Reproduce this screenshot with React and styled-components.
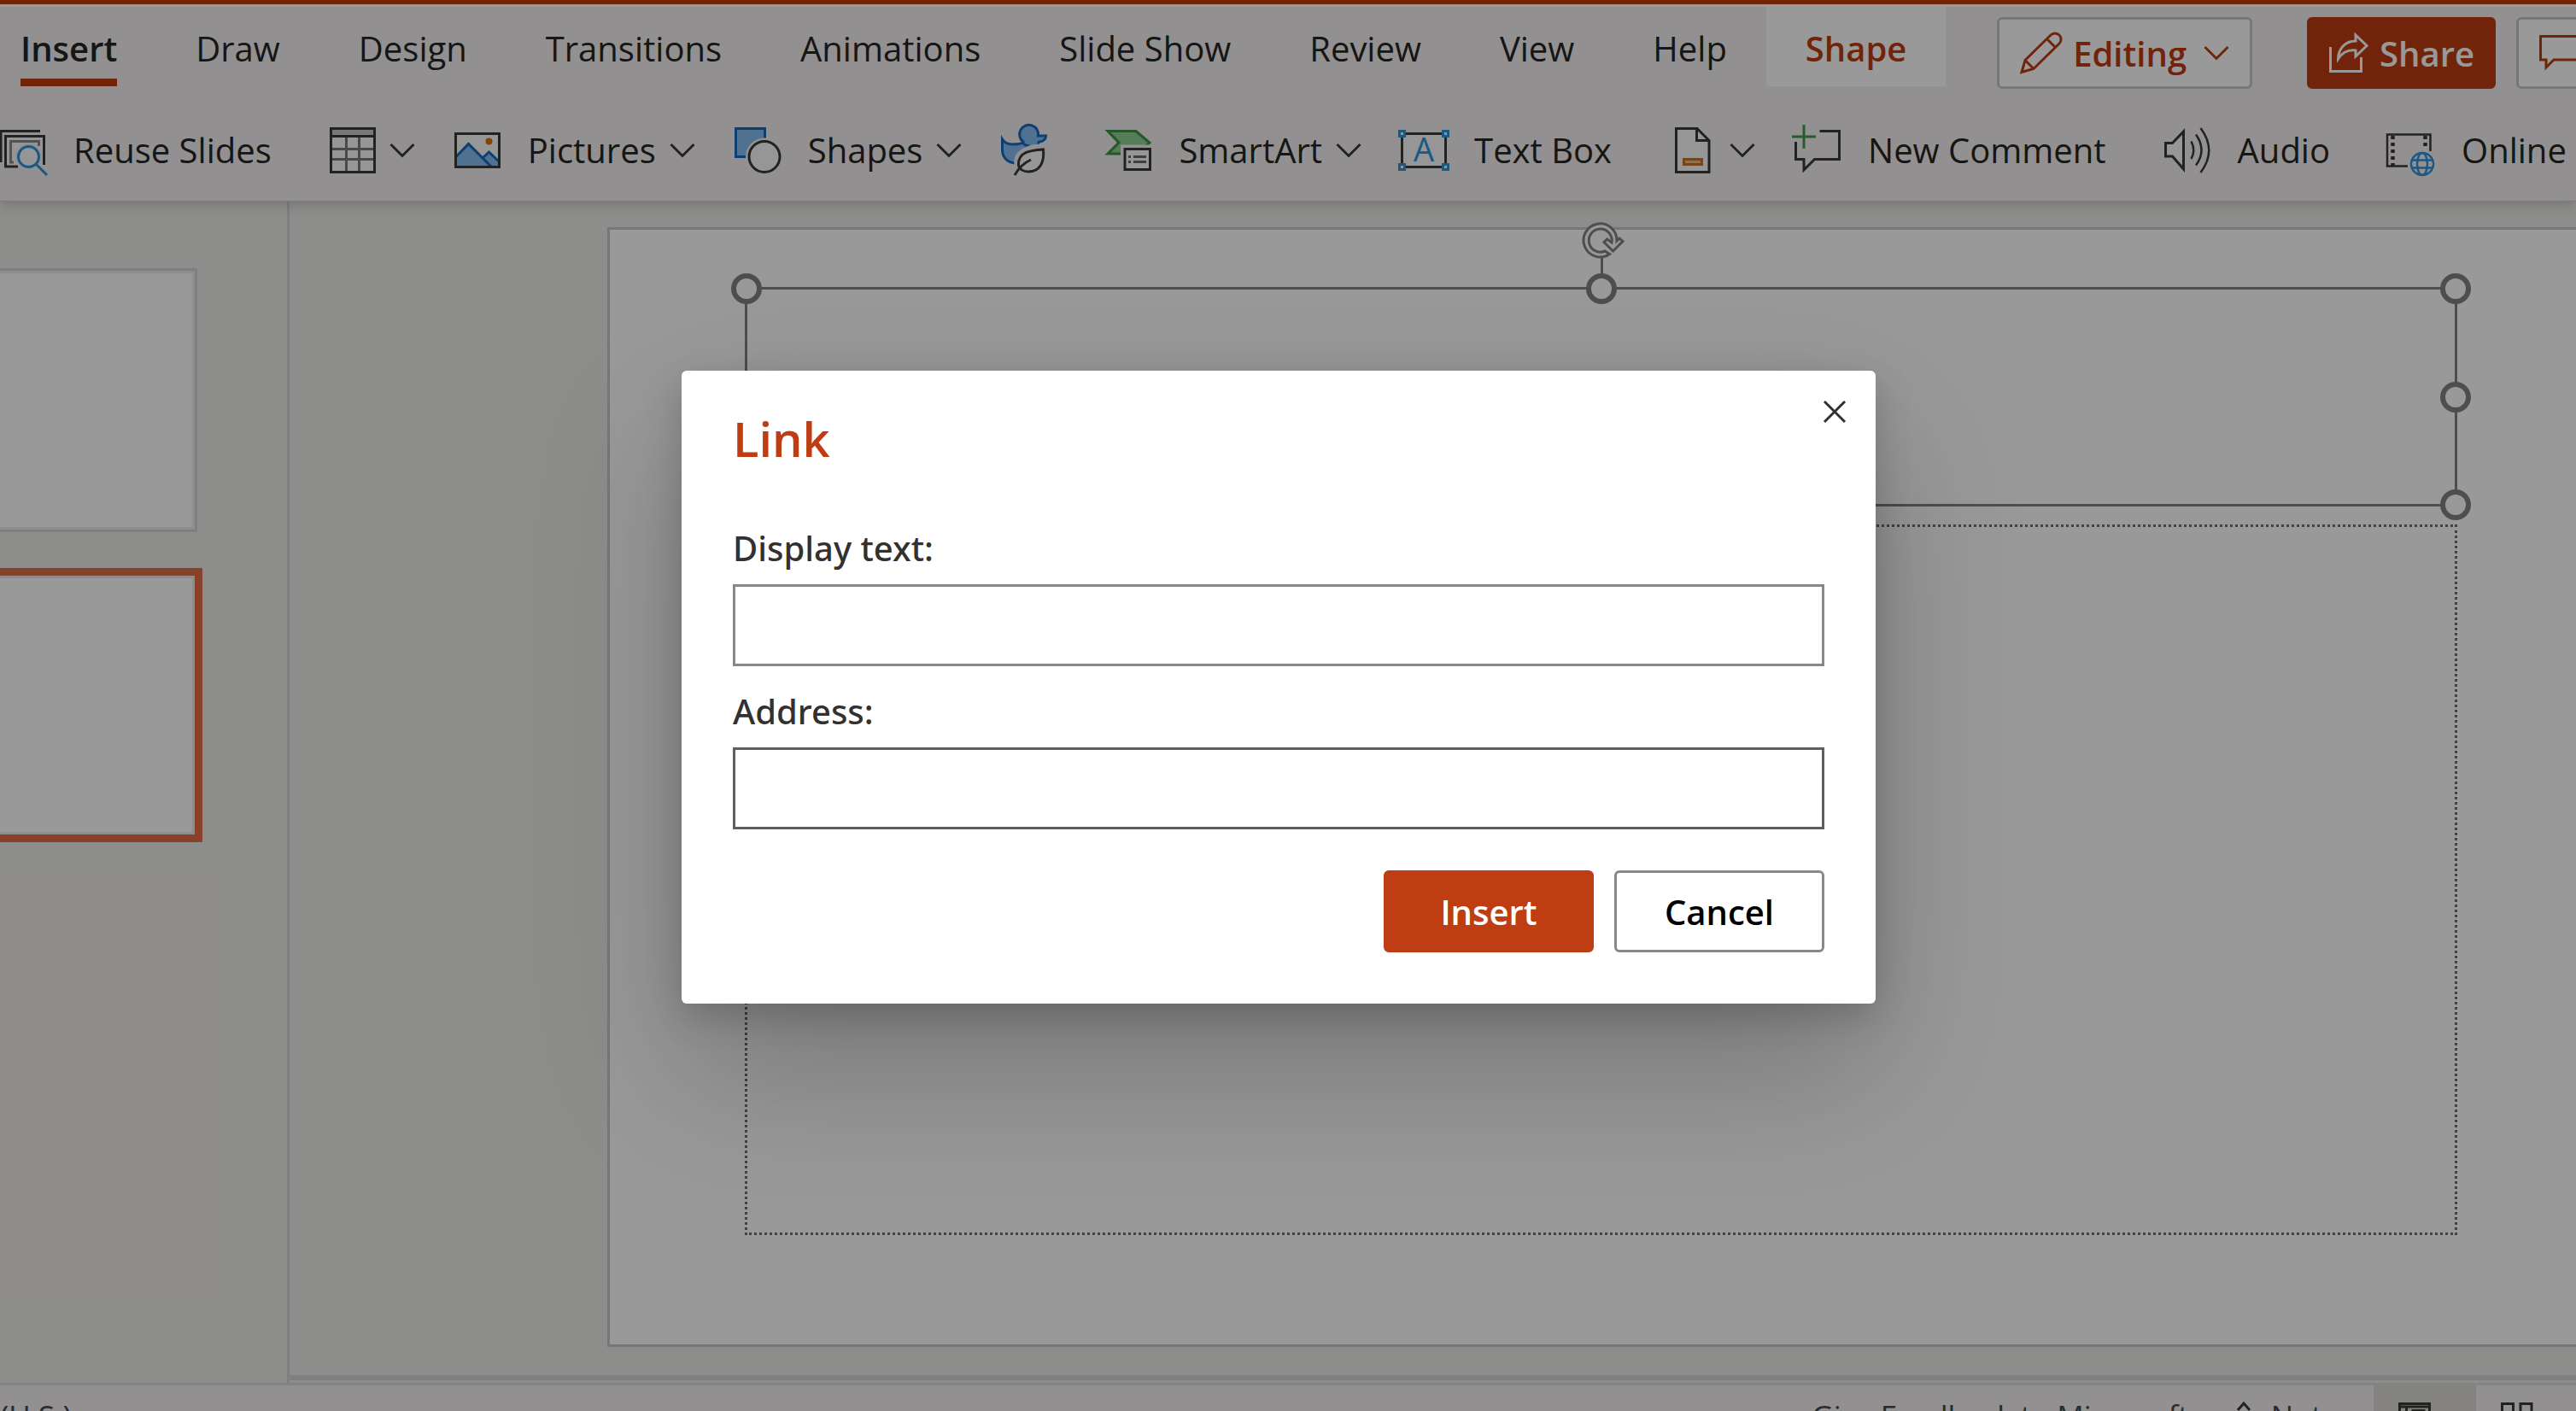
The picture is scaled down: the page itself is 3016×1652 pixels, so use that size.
import React from "react";
import styled, { createGlobalStyle } from "styled-components";

const accent = "#be3d12";
const ink = "#262524";
const line = "#3a3938";
const blue = "#1669bd";
const sky = "#2f93dc";
const paper = "#fafafa";
const chrome = "#f4f1f1";

const Global = createGlobalStyle`
  * { box-sizing: border-box; }
  body { margin: 0; background: #ecebe8; overflow: hidden; }
  body, button, input { font-family: "Open Sans", "Noto Sans", sans-serif; }
  svg { display: block; overflow: visible; flex: none; }
  button { border: 0; background: none; padding: 0; margin: 0; white-space: nowrap; cursor: pointer; }
`;

const Shell = styled.div`
  position: relative;
  display: flex;
  flex-direction: column;
  height: 100vh;
  overflow: hidden;
`;

const Header = styled.header`
  position: relative;
  z-index: 1;
  flex: none;
  overflow-x: clip;
  background: ${chrome};
  border-top: 5px solid ${accent};
  border-bottom: 1px solid #cfcdca;
  box-shadow: 0 2px 16px rgba(0, 0, 0, 0.2);
`;

const TabRow = styled.div`
  display: flex;
  align-items: flex-start;
  border-top: 3px solid #ffffff;
`;

const Tabs = styled.nav`
  display: flex;
  margin-left: -22px;
`;

const Tab = styled.button`
  padding: 0 46px;
  font-size: 40px;
  line-height: 60px;
  font-weight: ${(p) => (p.$active || p.$contextual ? 600 : 400)};
  color: ${(p) => (p.$contextual ? accent : ink)};
  background: ${(p) => (p.$contextual ? "#ffffff" : "transparent")};
`;

const TabLabel = styled.span`
  display: block;
  padding: 19px 0 5px;
  border-bottom: 9px solid ${(p) => (p.$active ? accent : "transparent")};
`;

const Actions = styled.div`
  display: flex;
  gap: 24px;
  margin: 12px -32px 0 auto;
`;

const ActionButton = styled.button`
  display: flex;
  align-items: center;
  height: 84px;
  padding: 0 ${(p) => (p.$solid ? 22 : 24)}px;
  gap: 12px;
  border: 3px solid ${(p) => (p.$solid ? accent : "#c8c6c4")};
  border-radius: 6px;
  font-size: 40px;
  font-weight: 600;
  color: ${(p) => (p.$solid ? "#ffffff" : accent)};
  background: ${(p) => (p.$solid ? accent : "#ffffff")};
  margin-right: ${(p) => (p.$apart ? "40px" : "0")};
`;

const ActionText = styled.span`
  display: flex;
  align-items: center;
  gap: 20px;
`;

const Ribbon = styled.div`
  display: flex;
  align-items: center;
  gap: 46px;
  height: 118px;
  margin-top: 13px;
`;

const Command = styled.button`
  display: flex;
  align-items: center;
  flex: none;
  gap: ${(p) => (p.$compact ? 16 : 32)}px;
  padding-right: ${(p) => (p.$menu ? 0 : 22)}px;
  font-size: 40px;
  line-height: 60px;
  color: ${ink};
`;

const CommandText = styled.span`
  display: flex;
  align-items: center;
  gap: 16px;
`;

const Body = styled.main`
  flex: 1;
  display: flex;
  min-height: 0;
`;

const Thumbs = styled.aside`
  flex: none;
  width: 339px;
  padding-top: 78px;
  border-right: 3px solid #d3d4d8;
`;

const Thumb = styled.div`
  width: ${(p) => (p.$selected ? 237 : 231)}px;
  height: ${(p) => (p.$selected ? 321 : 309)}px;
  margin-bottom: 42px;
  padding: 3px 3px 3px 0;
  border: solid ${(p) => (p.$selected ? "#e66d47" : "#d4d4da")};
  border-width: ${(p) => (p.$selected ? "9px 9px 9px 0" : "3px 3px 3px 0")};
  &::after {
    content: "";
    display: block;
    height: 100%;
    background: #ffffff;
  }
`;

const Canvas = styled.section`
  flex: 1;
  min-width: 0;
  display: flex;
  padding: 30px 0 33px 372px;
  border-bottom: 6px solid #d0d4d6;
  margin-bottom: 3px;
`;

const Slide = styled.div`
  flex: 1;
  display: flex;
  flex-direction: column;
  gap: 23px;
  margin-right: -22px;
  padding: 69px 160px 128px;
  background: #ffffff;
  border: 3px solid #c7c7c6;
`;

const TitleBox = styled.div`
  position: relative;
  height: 253px;
  &::before {
    content: "";
    position: absolute;
    inset: -2px;
    border: 3px solid #82827f;
  }
`;

const BodyBox = styled.div`
  flex: 1;
  margin: 0 -2px;
  border: 3px dotted #6e6e6c;
`;

const Handle = styled.i`
  position: absolute;
  left: ${(p) => p.$x}%;
  top: ${(p) => p.$y}%;
  width: 36px;
  height: 36px;
  margin: -18px;
  border: 6px solid #82827f;
  border-radius: 50%;
  background: #ffffff;
`;

const Rotator = styled.div`
  position: absolute;
  left: 50%;
  bottom: 100%;
  width: 3px;
  height: 38px;
  margin-left: -1px;
  background: #82827f;
  svg {
    position: absolute;
    left: -23px;
    bottom: 34px;
  }
`;

const StatusBar = styled.footer`
  flex: none;
  display: flex;
  justify-content: space-between;
  height: 33px;
  overflow: hidden;
  border-top: 3px solid #dedbd7;
  background: ${chrome};
  font-size: 35px;
  line-height: 48px;
  color: #4a4846;
`;

const StatusGroup = styled.div`
  display: flex;
  align-items: flex-start;
  margin-right: -3px;
`;

const StatusButton = styled.button`
  display: flex;
  align-items: flex-start;
  gap: 24px;
  margin-right: ${(p) => p.$after}px;
  padding-top: 12px;
  font-size: 35px;
  line-height: 48px;
  color: #4a4846;
`;

const ViewButton = styled.button`
  display: flex;
  width: 120px;
  height: 66px;
  padding: 20px 0 0 29px;
  background: ${(p) => (p.$on ? "#dddbd7" : "transparent")};
`;

const Region = styled.span`
  padding-top: 12px;
`;

const Overlay = styled.div`
  position: absolute;
  inset: 0;
  z-index: 2;
  display: flex;
  align-items: center;
  justify-content: center;
  padding: 0 22px 43px 0;
  background: rgba(0, 0, 0, 0.4);
`;

const Dialog = styled.form`
  position: relative;
  width: 1398px;
  padding: 39px 60px 60px;
  border-radius: 6px;
  background: #ffffff;
  box-shadow: 0 77px 173px rgba(0, 0, 0, 0.22), 0 14px 43px rgba(0, 0, 0, 0.18);
`;

const Title = styled.h1`
  margin: 0 0 59px;
  font-size: 56px;
  line-height: 80px;
  font-weight: 600;
  color: ${accent};
`;

const Close = styled.button`
  position: absolute;
  top: 35px;
  right: 35px;
`;

const Field = styled.div`
  display: flex;
  flex-direction: column;
  gap: 12px;
  margin-bottom: 23px;
`;

const Label = styled.label`
  font-family: "Noto Sans", "Open Sans", sans-serif;
  font-size: 40px;
  line-height: 60px;
  font-weight: 500;
  color: #323130;
`;

const Input = styled.input`
  height: 96px;
  padding: 0 24px;
  border: 3px solid ${(p) => (p.$strong ? "#605e5c" : "#8a8886")};
  border-radius: 0;
  outline: none;
  font-size: 40px;
  background: #ffffff;
`;

const Buttons = styled.div`
  display: flex;
  justify-content: flex-end;
  gap: 24px;
  padding-top: 25px;
`;

const DialogButton = styled.button`
  width: 246px;
  height: 96px;
  border: 3px solid ${(p) => (p.$primary ? accent : "#8a8886")};
  border-radius: 6px;
  font-size: 40px;
  font-weight: 600;
  color: ${(p) => (p.$primary ? "#ffffff" : "#000000")};
  background: ${(p) => (p.$primary ? accent : "#ffffff")};
`;

const Icon = ({ w = 54, h = 54, stroke = line, sw = 3, children }) => (
  <svg width={w} height={h} viewBox={`0 0 ${w} ${h}`} fill="none" stroke={stroke} strokeWidth={sw} aria-hidden="true">
    {children}
  </svg>
);

const Chevron = ({ color = line }) => (
  <Icon w={30} h={18} stroke={color}>
    <path d="M1.5 2L15 15.5L28.5 2" />
  </Icon>
);

const ReuseIcon = () => (
  <Icon>
    <path d="M47 4.5H1V41" />
    <path d="M6.5 10.5H51.5V46H6.5Z" fill={paper} stroke="none" />
    <path d="M21 46H6.5V10.5H51.5V44" />
    <path d="M16 41H12.5V16.5H45.5V22" stroke="#8c8a88" />
    <path d="M42 43L56 57M45.5 34.5a12 12 0 1 1-24 0a12 12 0 1 1 24 0" stroke={chrome} strokeWidth="8" />
    <circle cx="33.5" cy="34.5" r="12" fill={paper} stroke={sky} />
    <path d="M42 43L55 56" stroke={sky} />
  </Icon>
);

const TableIcon = () => (
  <Icon>
    <path d="M1.5 1.5H52.5V52.5H1.5Z" fill={paper} stroke="none" />
    <path d="M1.5 1.5H52.5V10.5H1.5Z" fill="#cccac8" stroke="none" />
    <path d="M19.5 10.5V52M34.5 10.5V52M2 25.5H52M2 37.5H52" stroke="#7c7a78" />
    <path d="M1.5 1.5H52.5V52.5H1.5ZM1.5 10.5H52.5" />
  </Icon>
);

const PictureIcon = () => (
  <Icon>
    <path d="M1.5 7.5H52.5V46.5H1.5Z" fill={paper} stroke="none" />
    <path d="M2 34.5L16.5 19.5L43 46H2ZM33 36L40.5 29L52 40V46H43Z" fill="#88bdf0" stroke="none" />
    <path d="M2 34.5L16.5 19.5L43 46M33 36L40.5 29L52 40" stroke={blue} />
    <circle cx="40.5" cy="16.5" r="4" fill="#dc6e0d" stroke="none" />
    <path d="M1.5 7.5H52.5V46.5H1.5Z" />
  </Icon>
);

const ShapesIcon = () => (
  <Icon>
    <path d="M1.5 1.5H35.5V34.5H1.5Z" fill="#88bdf0" stroke={blue} />
    <circle cx="35" cy="34.5" r="22" fill={chrome} stroke="none" />
    <circle cx="35" cy="34.5" r="18" fill={paper} />
  </Icon>
);

const DuckIcon = () => (
  <Icon>
    <path
      d="M1.5 14C4 18 9 20 14 20C20 20 25 19 26 17A11 11 0 1 1 43.5 10H52.5C52.5 15 48 17 44.5 17L40 28L16 42C7 41 1.5 35 1.5 26Z"
      fill="#88bdf0"
      stroke={blue}
    />
    <path d="M24 17Q28 22 34 22" stroke={blue} />
    <path d="M50 24C35 23 18 30 20 43L24 51C38 55 54 45 50 24Z" fill={chrome} stroke={chrome} strokeWidth="9" />
    <path d="M49.5 26C36 27 20 28 20.5 44C21 49 26 52 32 52C46 52 51 40 49.5 26Z" fill={paper} />
    <path d="M16 56C20 49 26 42 35 38" />
  </Icon>
);

const SmartArtIcon = () => (
  <Icon>
    <path d="M3 4.5H36L52 18L38 31H3L16 18Z" fill="#90cf93" stroke="#3f9147" />
    <path d="M18 20.5H56V54H18Z" fill={chrome} stroke="none" />
    <path d="M23 25.5H52.5V49.5H23Z" fill={paper} />
    <path d="M27 34.5H30M33 34.5H48M27 40.5H30M33 40.5H48" stroke="#6c6a68" />
  </Icon>
);

const TextBoxIcon = () => (
  <Icon>
    <path d="M1.5 7.5H52.5V46.5H1.5Z" fill={paper} />
    <text x="27" y="40" textAnchor="middle" fontFamily="Open Sans" fontSize="38" fill={sky} stroke="none">A</text>
    <g fill={paper} stroke={sky}>
      <path d="M-1.5 4.5h6v6h-6zM49.5 4.5h6v6h-6zM-1.5 43.5h6v6h-6zM49.5 43.5h6v6h-6z" />
    </g>
  </Icon>
);

const FooterIcon = () => (
  <Icon>
    <path d="M7.5 1.5H32L46 15.5V52.5H7.5Z" fill={paper} />
    <path d="M31.5 2V15.5H46" />
    <path d="M16.5 37.5H37.5V43.5H16.5Z" fill="#eec079" stroke="#dc6e0d" />
  </Icon>
);

const NewCommentIcon = () => (
  <Icon>
    <path d="M29.5 4.5H52.5V37.5H23.5L11 50V37.5H1.5V17" />
    <path d="M-3 11H25M11 -3V25" stroke="#3f9a47" />
  </Icon>
);

const AudioIcon = () => (
  <Icon>
    <path d="M1.5 18.5H9.5L22.5 5V49L9.5 34H1.5Z" fill={paper} />
    <path d="M31.5 16.5Q37 27 31.5 37M37 8.5Q50 27 37 44.5M42.5 1Q62 27 42.5 53" strokeWidth="2.5" />
  </Icon>
);

const VideoIcon = () => (
  <Icon>
    <path d="M23 45.5H-1V8.5H49.5V28" strokeWidth="2.5" />
    <path d="M5.5 10V46M43.5 10V22" strokeWidth="4.5" strokeDasharray="4 4" />
    <g stroke={sky} strokeWidth="2.5">
      <circle cx="40" cy="43" r="13" />
      <ellipse cx="40" cy="43" rx="6" ry="13" />
      <path d="M28 38.5H52M28 47.5H52" />
    </g>
  </Icon>
);

const PencilIcon = () => (
  <Icon w={50} h={50} stroke={accent}>
    <path d="M2 47.5L6 33.5L36 4A7 7 0 0 1 46 14L16 43.5ZM6 33.5L16 43.5M31.5 8.5L41.5 18.5" />
  </Icon>
);

const ShareIcon = () => (
  <Icon w={48} h={48} stroke="#ffffff">
    <path d="M2.5 17V45.5H38.5V29" />
    <path d="M32 3L45 15.5L32 28V21C23 20 16 24 11.5 31C11.5 19 20 10 32 10Z" />
  </Icon>
);

const BubbleIcon = () => (
  <Icon w={48} h={42} stroke={accent}>
    <path d="M1.5 1.5H46.5V29H17L8 38V29H1.5Z" />
  </Icon>
);

const RotateIcon = () => (
  <Icon w={54} h={46} stroke="#82827f">
    <path
      d="M33.5 39.5A19.5 19.5 0 1 1 42 24L45 21L49 24.5L37.5 36L27 25.5L30.5 22L36 26A13.5 13.5 0 1 0 28 36Z"
      fill="#ffffff"
    />
  </Icon>
);

const NormalViewIcon = () => (
  <Icon w={38} h={32}>
    <path d="M1.5 1.5H36.5V30.5H1.5ZM1.5 5H36.5M9.5 5V30M17 9.5H30V24H17Z" />
  </Icon>
);

const SorterIcon = () => (
  <Icon w={38} h={32}>
    <path d="M1.5 1.5H14.5V13H1.5ZM23 1.5H36V13H23ZM1.5 19H14.5V30H1.5ZM23 19H36V30H23Z" />
  </Icon>
);

const tabs = ["Insert", "Draw", "Design", "Transitions", "Animations", "Slide Show", "Review", "View", "Help", "Shape"];

const commands = [
  { icon: ReuseIcon, label: "Reuse Slides" },
  { icon: TableIcon, name: "Table", menu: true },
  { icon: PictureIcon, label: "Pictures", menu: true },
  { icon: ShapesIcon, label: "Shapes", menu: true },
  { icon: DuckIcon, name: "Icons" },
  { icon: SmartArtIcon, label: "SmartArt", menu: true },
  { icon: TextBoxIcon, label: "Text Box" },
  { icon: FooterIcon, name: "Header and footer", menu: true },
  { icon: NewCommentIcon, label: "New Comment" },
  { icon: AudioIcon, label: "Audio" },
  { icon: VideoIcon, label: "Online" },
];

const handles = [[0, 0], [50, 0], [100, 0], [0, 50], [100, 50], [0, 100], [50, 100], [100, 100]];

export default function App() {
  return (
    <Shell>
      <Global />
      <Header>
        <TabRow>
          <Tabs>
            {tabs.map((t) => (
              <Tab key={t} type="button" $active={t === "Insert"} $contextual={t === "Shape"}>
                <TabLabel $active={t === "Insert"}>{t}</TabLabel>
              </Tab>
            ))}
          </Tabs>
          <Actions>
            <ActionButton type="button" $apart>
              <PencilIcon />
              <ActionText>
                Editing
                <Chevron color={accent} />
              </ActionText>
            </ActionButton>
            <ActionButton type="button" $solid>
              <ShareIcon />
              Share
            </ActionButton>
            <ActionButton type="button" aria-label="Comments">
              <BubbleIcon />
            </ActionButton>
          </Actions>
        </TabRow>
        <Ribbon>
          {commands.map(({ icon: Glyph, label, name, menu }) => (
            <Command key={label || name} type="button" aria-label={name} $menu={menu} $compact={!label}>
              <Glyph />
              {label ? (
                <CommandText>
                  {label}
                  {menu && <Chevron />}
                </CommandText>
              ) : (
                menu && <Chevron />
              )}
            </Command>
          ))}
        </Ribbon>
      </Header>
      <Body>
        <Thumbs>
          <Thumb />
          <Thumb $selected />
        </Thumbs>
        <Canvas>
          <Slide>
            <TitleBox>
              <Rotator>
                <RotateIcon />
              </Rotator>
              {handles.map(([x, y]) => (
                <Handle key={`${x}-${y}`} $x={x} $y={y} />
              ))}
            </TitleBox>
            <BodyBox />
          </Slide>
        </Canvas>
      </Body>
      <StatusBar>
        <Region>(U.S.)</Region>
        <StatusGroup>
          <StatusButton type="button" $after={56}>Give Feedback to Microsoft</StatusButton>
          <StatusButton type="button" $after={24}>
            <Icon w={16} h={32}>
              <path d="M1 17L8 9L15 17M1 29L8 21L15 29" />
            </Icon>
            Notes
          </StatusButton>
          <ViewButton type="button" aria-label="Normal view" $on>
            <NormalViewIcon />
          </ViewButton>
          <ViewButton type="button" aria-label="Slide sorter">
            <SorterIcon />
          </ViewButton>
        </StatusGroup>
      </StatusBar>
      <Overlay>
        <Dialog role="dialog" aria-labelledby="link-title" onSubmit={(e) => e.preventDefault()}>
          <Title id="link-title">Link</Title>
          <Close type="button" aria-label="Close">
            <Icon w={26} h={26} stroke="#323130">
              <path d="M1 1L25 25M25 1L1 25" />
            </Icon>
          </Close>
          <Field>
            <Label htmlFor="display-text">Display text:</Label>
            <Input id="display-text" type="text" />
          </Field>
          <Field>
            <Label htmlFor="address">Address:</Label>
            <Input id="address" type="text" $strong />
          </Field>
          <Buttons>
            <DialogButton type="submit" $primary>Insert</DialogButton>
            <DialogButton type="button">Cancel</DialogButton>
          </Buttons>
        </Dialog>
      </Overlay>
    </Shell>
  );
}
